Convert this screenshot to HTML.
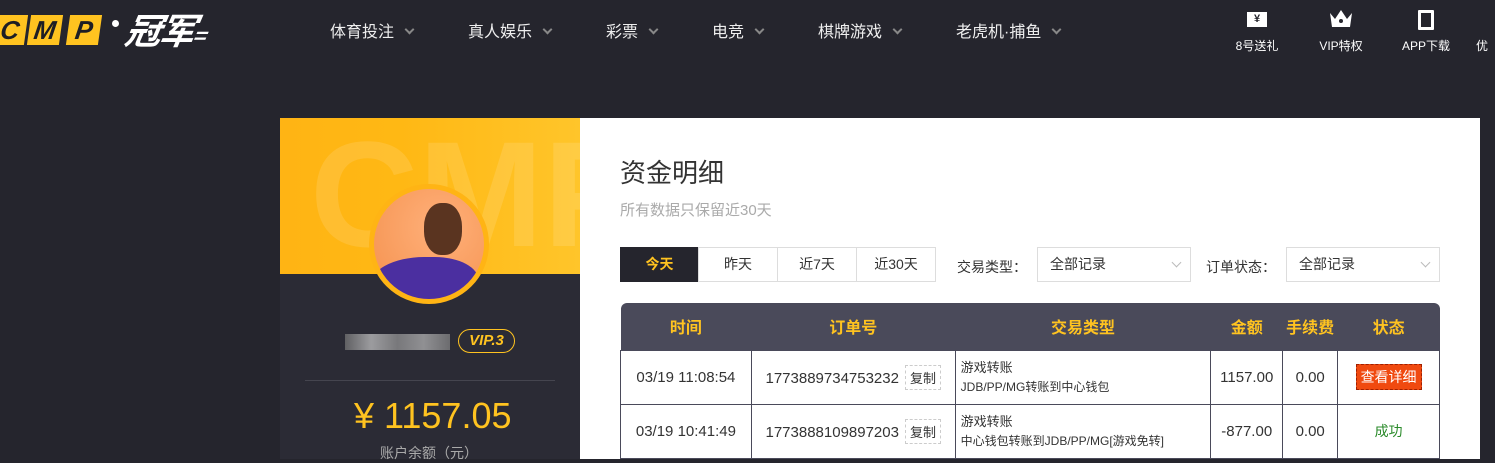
<!DOCTYPE html>
<html><head><meta charset="utf-8"><style>
*{margin:0;padding:0;box-sizing:border-box}
body{width:1495px;height:459px;overflow:hidden;background:#25252d;font-family:"Liberation Sans","Noto Sans CJK SC",sans-serif;position:relative}
.abs{position:absolute}
.nav{position:absolute;top:18px;color:#eee;font-size:16px}
.nav i{display:inline-block;width:7px;height:7px;border-right:2px solid #888;border-bottom:2px solid #888;transform:rotate(45deg);margin-left:12px;position:relative;top:-4px}
.ico{position:absolute;top:37px;color:#fff;font-size:12px;text-align:center;width:60px}
.lb{position:absolute;display:inline-block;width:32px;height:30px;background:#ffc320;color:#1e1e24;font:italic bold 26px "Liberation Sans",sans-serif;text-align:center;line-height:30px;transform:skewX(-8deg)}
.fb{position:absolute;top:247px;height:35px;border:1px solid #ddd;font-size:14px;color:#333;text-align:center;line-height:33px;background:#fff}
.sel{position:absolute;top:247px;width:154px;height:35px;border:1px solid #ddd;font-size:14px;color:#333;line-height:33px;padding-left:12px}
.sel:after{content:"";position:absolute;right:10px;top:11px;width:6px;height:6px;border-right:1px solid #bbb;border-bottom:1px solid #bbb;transform:rotate(45deg)}
table{position:absolute;left:620px;top:303px;width:820px;border-collapse:collapse;font-size:15px;color:#333}
th{background:#4a4a5a;color:#ffc320;font-size:16px;height:47px;font-weight:bold}
td{border:1px solid #4a4a5a;height:54px;text-align:center}
td.t{text-align:left;padding-left:5px;font-size:13px;line-height:19px}
td.t small{font-size:12px}
.cp{display:inline-block;border:1px dashed #ccc;padding:2px 4px;margin-left:6px;font-size:13px}
</style></head><body>
<div class="lb" style="left:-6px;top:15px">C</div>
<div class="lb" style="left:29px;top:15px">M</div>
<div class="lb" style="left:68px;top:15px">P</div>
<div class="abs" style="left:112px;top:20px;width:7px;height:7px;border-radius:50%;background:#fff"></div>
<div class="abs" style="left:126px;top:3px;color:#fff;font:italic bold 36px 'Noto Sans CJK SC',sans-serif;letter-spacing:-2px;transform:skewX(-10deg)">冠军<span style="font-size:22px">=</span></div>
<div class="nav" style="left:330px">体育投注<i></i></div>
<div class="nav" style="left:468px">真人娱乐<i></i></div>
<div class="nav" style="left:606px">彩票<i></i></div>
<div class="nav" style="left:712px">电竞<i></i></div>
<div class="nav" style="left:818px">棋牌游戏<i></i></div>
<div class="nav" style="left:956px">老虎机·捕鱼<i></i></div>
<div class="abs" style="left:1247px;top:12px;width:20px;height:15px;background:#fff;color:#25252d;font-size:11px;font-weight:bold;text-align:center;line-height:15px">¥</div>
<svg class="abs" style="left:1328px;top:7px" width="26" height="22"><path d="M2 6 L7 12 L13 3 L19 12 L24 6 L22 20 L4 20Z" fill="#fff"/><circle cx="13" cy="14" r="2" fill="#25252d"/></svg>
<div class="abs" style="left:1418px;top:10px;width:16px;height:20px;border:3px solid #fff;border-radius:1px"></div>
<div class="ico" style="left:1227px">8号送礼</div>
<div class="ico" style="left:1311px">VIP特权</div>
<div class="ico" style="left:1396px">APP下载</div>
<div class="ico" style="left:1462px;width:40px">优</div>
<div class="abs" style="left:280px;top:118px;width:300px;height:341px;background:#2b2b35"></div>
<div class="abs" style="left:280px;top:118px;width:300px;height:156px;background:linear-gradient(90deg,#ffb414,#ffb814 40%,#ffc52a);overflow:hidden"><div style="position:absolute;left:30px;top:-10px;font:bold 150px 'Liberation Sans',sans-serif;color:rgba(255,255,255,0.12)">CMP</div></div>
<div class="abs" style="left:369px;top:184px;width:120px;height:120px;border-radius:50%;background:#ffb414"></div>
<div class="abs" style="left:374px;top:189px;width:110px;height:110px;border-radius:50%;background:radial-gradient(circle at 60% 35%,#ffb07a,#f4904c);overflow:hidden"><div style="position:absolute;left:-5px;top:68px;width:110px;height:60px;background:#4b2fa0;border-radius:50% 40% 0 0"></div><div style="position:absolute;left:50px;top:14px;width:38px;height:52px;background:#5a3420;border-radius:45%"></div></div>
<div class="abs" style="left:345px;top:334px;width:105px;height:16px;background:linear-gradient(90deg,#777,#ccc,#999,#bbb,#888);opacity:.7"></div>
<div class="abs" style="left:458px;top:329px;width:57px;height:24px;border:1.5px solid #ffc320;border-radius:12px;color:#ffc320;font:italic bold 15px 'Liberation Sans',sans-serif;text-align:center;line-height:21px">VIP.3</div>
<div class="abs" style="left:305px;top:380px;width:250px;height:1px;background:#45454f"></div>
<div class="abs" style="left:354px;top:395px;color:#ffc320;font-size:36px">¥ 1157.05</div>
<div class="abs" style="left:380px;top:443px;color:#aaa;font-size:14px">账户余额（元）</div>
<div class="abs" style="left:580px;top:118px;width:900px;height:341px;background:#fff"></div>
<div class="abs" style="left:620px;top:153px;font-size:26px;color:#333">资金明细</div>
<div class="abs" style="left:620px;top:199px;font-size:15px;color:#aaa">所有数据只保留近30天</div>
<div class="fb" style="left:620px;width:79px;background:#25252d;border-color:#25252d;color:#ffc320;font-weight:bold">今天</div>
<div class="fb" style="left:698px;width:80px">昨天</div>
<div class="fb" style="left:777px;width:80px">近7天</div>
<div class="fb" style="left:856px;width:80px">近30天</div>
<div class="abs" style="left:957px;top:257px;font-size:14px;color:#333">交易类型：</div>
<div class="sel" style="left:1037px">全部记录</div>
<div class="abs" style="left:1206px;top:257px;font-size:14px;color:#333">订单状态：</div>
<div class="sel" style="left:1286px">全部记录</div>
<table>
<tr><th style="width:131px;border-top-left-radius:6px">时间</th><th style="width:204px">订单号</th><th style="width:256px">交易类型</th><th style="width:72px">金额</th><th style="width:55px">手续费</th><th style="width:102px;border-top-right-radius:6px">状态</th></tr>
<tr><td>03/19 11:08:54</td><td>1773889734753232<span class="cp">复制</span></td><td class="t">游戏转账<br><small>JDB/PP/MG转账到中心钱包</small></td><td>1157.00</td><td>0.00</td><td><span style="display:inline-block;background:#f04a10;color:#fff;border:1px dashed #a02000;padding:2px 4px;font-size:14px">查看详细</span></td></tr>
<tr><td>03/19 10:41:49</td><td>1773888109897203<span class="cp">复制</span></td><td class="t">游戏转账<br><small>中心钱包转账到JDB/PP/MG[游戏免转]</small></td><td>-877.00</td><td>0.00</td><td style="color:#2a8a2a;font-size:14px">成功</td></tr>
</table>
</body></html>
